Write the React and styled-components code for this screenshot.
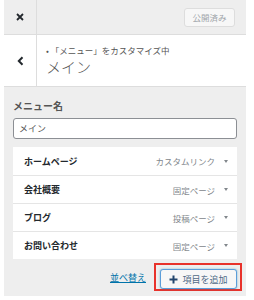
import React from 'react'
import styled, {createGlobalStyle} from 'styled-components'

const Global = createGlobalStyle`
  html, body {
    margin: 0;
    padding: 0;
    background: #fff;
    font-family: "Noto Sans CJK JP", "Noto Sans", "Liberation Sans", sans-serif;
  }
`

const Panel = styled.div`
  margin-left: 4px;
  width: 242px;
  height: 296px;
  background: #eee;
  display: flex;
  flex-direction: column;
  color: #555;
`

const TopBar = styled.div`
  height: 34px;
  display: flex;
  align-items: center;
  border-bottom: 1px solid #ddd;
`

const IconCell = styled.div`
  width: 33px;
  height: 100%;
  display: flex;
  align-items: center;
  justify-content: center;
  border-right: 1px solid #ddd;
  color: #23282d;
  box-sizing: border-box;
`

const Spacer = styled.div`
  flex: 1;
`

const PublishButton = styled.div`
  margin-right: 11px;
  width: 51px;
  height: 19px;
  box-sizing: border-box;
  border: 1px solid #ddd;
  border-radius: 3px;
  background: #f7f7f7;
  color: #a0a5aa;
  font-size: 8.5px;
  display: flex;
  align-items: center;
  justify-content: center;
`

const Header = styled.div`
  height: 51px;
  background: #fff;
  display: flex;
  border-bottom: 1px solid #ddd;
`

const Titles = styled.div`
  padding-left: 9px;
  padding-top: 9px;
  display: flex;
  flex-direction: column;
`

const Crumb = styled.div`
  font-size: 8.5px;
  line-height: 12px;
  color: #555;
`

const Title = styled.div`
  font-size: 15px;
  line-height: 20px;
  font-weight: 300;
  color: #555;
  margin-top: 1px;
`

const Section = styled.div`
  padding: 12px 9px 0;
  display: flex;
  flex-direction: column;
`

const Label = styled.div`
  font-size: 10px;
  line-height: 14px;
  font-weight: 700;
  color: #555;
`

const NameInput = styled.div`
  margin-top: 5px;
  height: 21px;
  box-sizing: border-box;
  border: 1px solid #8c8f94;
  border-radius: 3px;
  background: #fff;
  font-size: 9px;
  color: #555;
  padding-left: 5px;
  display: flex;
  align-items: center;
`

const ItemList = styled.div`
  margin-top: 8px;
  background: #fff;
  display: flex;
  flex-direction: column;
`

const Item = styled.div`
  height: 28px;
  box-sizing: border-box;
  display: flex;
  align-items: center;
  padding: 0 9px 0 11px;
  border-top: ${p => (p.$first ? 'none' : '1px solid #e5e5e5')};
`

const ItemTitle = styled.div`
  flex: 1;
  font-size: 9px;
  font-weight: 700;
  color: #23282d;
`

const ItemType = styled.div`
  font-size: 8.5px;
  color: #82878c;
`

const Arrow = styled.div`
  margin-left: 9px;
  width: 0;
  height: 0;
  border-left: 2.5px solid transparent;
  border-right: 2.5px solid transparent;
  border-top: 3.5px solid #82878c;
`

const Actions = styled.div`
  margin-top: 4px;
  display: flex;
  align-items: center;
  justify-content: flex-end;
  margin-right: -5px;
`

const ReorderLink = styled.a`
  font-size: 9px;
  color: #0073aa;
  text-decoration: underline;
  margin-right: 8px;
`

const Highlight = styled.div`
  border: 2px solid #e8322b;
  padding: 4px 3px 0 4px;
  height: 28px;
  box-sizing: border-box;
`

const AddButton = styled.div`
  width: 77px;
  height: 20px;
  box-sizing: border-box;
  border: 1px solid #5b9dd9;
  border-radius: 3px;
  background: #f7f7f7;
  box-shadow: 0 0 2px rgba(30, 140, 190, 0.6);
  display: flex;
  align-items: center;
  justify-content: center;
  gap: 4px;
  font-size: 9px;
  color: #4f6a86;
`

const Plus = () => (
  <svg width="9" height="9" viewBox="0 0 9 9">
    <path d="M4.5 0.5v8M0.5 4.5h8" stroke="#23466e" strokeWidth="2" />
  </svg>
)

const Close = () => (
  <svg width="8" height="8" viewBox="0 0 8 8">
    <path d="M1 1l6 6M7 1l-6 6" stroke="#23282d" strokeWidth="1.8" />
  </svg>
)

const Back = () => (
  <svg width="7" height="10" viewBox="0 0 7 10">
    <path d="M5.5 1.2L1.8 5l3.7 3.8" stroke="#23282d" strokeWidth="2" fill="none" />
  </svg>
)

const items = [
  {title: 'ホームページ', type: 'カスタムリンク'},
  {title: '会社概要', type: '固定ページ'},
  {title: 'ブログ', type: '投稿ページ'},
  {title: 'お問い合わせ', type: '固定ページ'}
]

export default function App () {
  return (
    <>
      <Global />
      <Panel>
        <TopBar>
          <IconCell><Close /></IconCell>
          <Spacer />
          <PublishButton>公開済み</PublishButton>
        </TopBar>
        <Header>
          <IconCell><Back /></IconCell>
          <Titles>
            <Crumb>• 「メニュー」をカスタマイズ中</Crumb>
            <Title>メイン</Title>
          </Titles>
        </Header>
        <Section>
          <Label>メニュー名</Label>
          <NameInput>メイン</NameInput>
          <ItemList>
            {items.map((it, i) => (
              <Item key={it.title} $first={i === 0}>
                <ItemTitle>{it.title}</ItemTitle>
                <ItemType>{it.type}</ItemType>
                <Arrow />
              </Item>
            ))}
          </ItemList>
          <Actions>
            <ReorderLink>並べ替え</ReorderLink>
            <Highlight>
              <AddButton><Plus />項目を追加</AddButton>
            </Highlight>
          </Actions>
        </Section>
      </Panel>
    </>
  )
}
